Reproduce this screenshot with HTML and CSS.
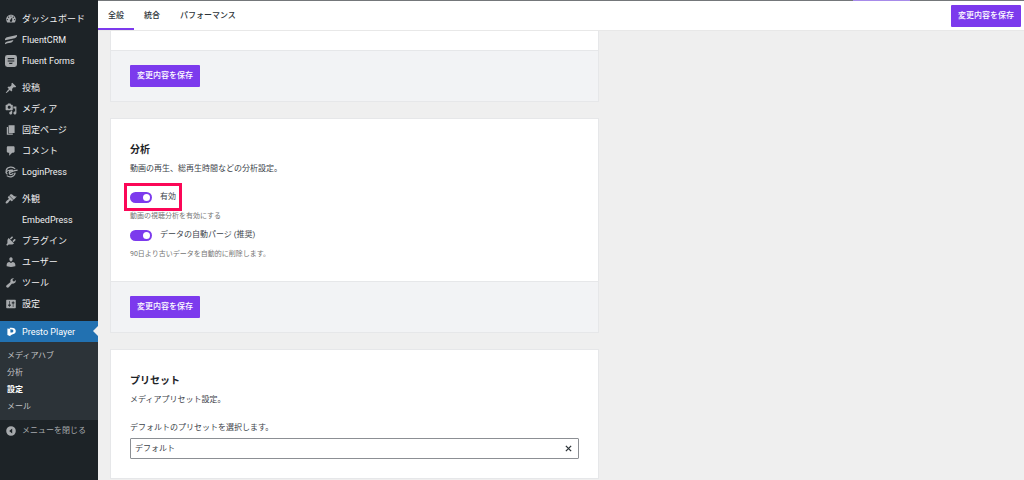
FILE: index.html
```html
<!DOCTYPE html>
<html lang="ja">
<head>
  <meta charset="UTF-8">
  <meta name="viewport" content="width=device-width, initial-scale=1.0">
  <title>Presto Player - 設定</title>
  <link rel="stylesheet" href="styles.css">
</head>
<body>
  <nav class="sidebar">
    <ul class="menu">
      <li><a href="#"><svg class="icon" viewBox="0 0 20 20"><path fill-rule="evenodd" d="M3.760 16h12.480c1.100-1.370 1.760-3.110 1.760-5 0-4.420-3.580-8-8-8s-8 3.580-8 8c0 1.890.66 3.630 1.760 5zM10 4c.55 0 1 .45 1 1s-.45 1-1 1-1-.45-1-1 .45-1 1-1zM6 6c.55 0 1 .45 1 1s-.45 1-1 1-1-.45-1-1 .45-1 1-1zm8 0c.55 0 1 .45 1 1s-.45 1-1 1-1-.45-1-1 .45-1 1-1zm-5.370 5.550L12 7v6c0 1.100-.9 2-2 2s-2-.9-2-2c0-.57.24-1.080.63-1.450zM4 10c.55 0 1 .45 1 1s-.45 1-1 1-1-.45-1-1 .45-1 1-1zm12 0c.55 0 1 .45 1 1s-.45 1-1 1-1-.45-1-1 .45-1 1-1z"/></svg>ダッシュボード</a></li>
      <li><a href="#"><svg class="icon" viewBox="0 0 20 20"><path d="M-1 11C0 7 2 5.500 5 5L21 1.500c-1 3.500-3 5-5 5.500L4 9.500C2 10 0 10 -1 11zM-1 18c1-4 3-5 5-5.500L14 10c-1 3-3 4-5 4.500L4 15.500c-2 .5-4 1.500-5 2.500z"/></svg>FluentCRM</a></li>
      <li><a href="#"><svg class="icon" viewBox="0 0 20 20"><path fill-rule="evenodd" d="M4 0h12a4 4 0 0 1 4 4v12a4 4 0 0 1-4 4H4a4 4 0 0 1-4-4V4a4 4 0 0 1 4-4zM4.500 5v2h11V5zM4.500 9v2h11V9zM7 13v2h3c1.500 0 2.500-.7 3-2z"/></svg>Fluent Forms</a></li>
    </ul>
    <ul class="menu">
      <li><a href="#"><svg class="icon" viewBox="0 0 20 20"><path d="M10.440 3.020l1.820-1.820 6.360 6.350-1.830 1.820c-1.050-.68-2.480-.57-3.410.36l-.75.75c-.92.93-1.040 2.350-.35 3.410l-1.830 1.820-2.410-2.410-2.800 2.790c-.42.42-3.380 2.710-3.800 2.290s1.860-3.390 2.280-3.810l2.790-2.790L4.100 9.360l1.830-1.820c1.050.69 2.480.57 3.400-.36l.75-.75c.93-.92 1.050-2.350.36-3.410z"/></svg>投稿</a></li>
      <li><a href="#"><svg class="icon" viewBox="0 0 20 20"><path fill-rule="evenodd" d="M13 11V4c0-.55-.45-1-1-1h-1.670L9 1H5L3.670 3H2c-.55 0-1 .45-1 1v7c0 .55.45 1 1 1h10c.55 0 1-.45 1-1zM7 4.500c1.380 0 2.500 1.120 2.500 2.500S8.380 9.500 7 9.500 4.500 8.380 4.500 7 5.620 4.500 7 4.500zM14 6h5v10.500c0 1.380-1.120 2.500-2.500 2.500S14 17.880 14 16.500s1.120-2.500 2.500-2.500c.17 0 .34.02.5.05V9h-3V6zm-4 8.050V13h2v3.500c0 1.380-1.120 2.500-2.500 2.500S7 17.880 7 16.500 8.120 14 9.500 14c.17 0 .34.02.5.05z"/></svg>メディア</a></li>
      <li><a href="#"><svg class="icon" viewBox="0 0 20 20"><path d="M6 15V2h10v13H6zm-1 1h8v2H3V5h2v11z"/></svg>固定ページ</a></li>
      <li><a href="#"><svg class="icon" viewBox="0 0 20 20"><path d="M5 2h9c1.100 0 2 .9 2 2v7c0 1.100-.9 2-2 2h-2l-5 5v-5H5c-1.100 0-2-.9-2-2V4c0-1.100.9-2 2-2z"/></svg>コメント</a></li>
      <li><a href="#"><svg class="icon icon-line" viewBox="0 0 20 20"><path d="M17 5C13 0 4 1 2 7c-1 3 0 5 2 7M3 16c5 4 13 2 14-5M1 11c3-4 7-5 12-4M7 12c3-3 7-4 14-5M7 12c1 3 4 3 7 0M13 7c-3 0-6 2-6 5"/></svg>LoginPress</a></li>
    </ul>
    <ul class="menu">
      <li><a href="#"><svg class="icon" viewBox="0 0 20 20"><path d="M14.480 11.060L7.410 3.990l1.500-1.500c.5-.56 2.300-.47 3.510.32 1.210.8 1.430 1.280 2.910 2.100 1.180.64 2.450 1.260 4.450.85zm-.71.71L6.700 4.700 4.930 6.470c-.39.39-.39 1.020 0 1.410l1.060 1.060c.39.39.39 1.030 0 1.420-.6.6-1.430 1.110-2.210 1.690-.35.26-.7.53-1.010.84C1.430 14.230.4 16.080 1.400 17.070c.99 1 2.840-.03 4.180-1.360.31-.31.58-.66.85-1.020.57-.78 1.080-1.610 1.690-2.210.39-.39 1.020-.39 1.410 0l1.060 1.060c.39.39 1.020.39 1.410 0z"/></svg>外観</a></li>
      <li><a href="#"><span class="icon"></span>EmbedPress</a></li>
      <li><a href="#"><svg class="icon" viewBox="0 0 20 20"><path d="M13.110 4.360L9.870 7.600 8 5.730l3.240-3.240c.35-.34 1.050-.2 1.560.32.52.51.66 1.210.31 1.550zm-8 1.770l.91-1.120 9.010 9.010-1.190.84c-.71.71-2.630 1.160-3.820 1.160H6.140L4.900 17.260c-.59.59-1.540.59-2.120 0-.59-.58-.59-1.530 0-2.120l1.240-1.240v-3.880c0-1.130.4-3.190 1.090-3.890zm7.260 3.970l3.240-3.240c.34-.35 1.040-.21 1.550.31.52.51.66 1.210.31 1.550l-3.240 3.250z"/></svg>プラグイン</a></li>
      <li><a href="#"><svg class="icon" viewBox="0 0 20 20"><path d="M10 9.250c-2.270 0-2.730-3.440-2.730-3.440C7 4.020 7.820 2 9.970 2c2.160 0 2.980 2.020 2.710 3.810 0 0-.41 3.440-2.680 3.440zm0 2.570L12.720 10c2.390 0 4.520 2.330 4.520 4.530v2.490s-3.650 1.130-7.240 1.130c-3.650 0-7.240-1.130-7.240-1.130v-2.490c0-2.250 1.940-4.480 4.470-4.480z"/></svg>ユーザー</a></li>
      <li><a href="#"><svg class="icon" viewBox="0 0 20 20"><path d="M16.680 9.770c-1.340 1.340-3.300 1.670-4.950.99l-5.410 6.520c-.99.99-2.590.99-3.580 0s-.99-2.590 0-3.570l6.520-5.420c-.68-1.650-.35-3.610.99-4.950 1.280-1.280 3.120-1.620 4.720-1.060l-2.890 2.890 2.820 2.820 2.860-2.870c.53 1.580.18 3.390-1.080 4.650z"/></svg>ツール</a></li>
      <li><a href="#"><svg class="icon" viewBox="0 0 20 20"><path fill-rule="evenodd" d="M18 16V4c0-.55-.45-1-1-1H3c-.55 0-1 .45-1 1v12c0 .55.45 1 1 1h14c.55 0 1-.45 1-1zM8 11h1c.55 0 1 .45 1 1s-.45 1-1 1H8v1.500c0 .28-.22.5-.5.5s-.5-.22-.5-.5V13H6c-.55 0-1-.45-1-1s.45-1 1-1h1V5.500c0-.28.22-.5.5-.5s.5.22.5.5V11zm5-2h-1c-.55 0-1-.45-1-1s.45-1 1-1h1V5.500c0-.28.22-.5.5-.5s.5.22.5.5V7h1c.55 0 1 .45 1 1s-.45 1-1 1h-1v5.500c0 .28-.22.5-.5.5s-.5-.22-.5-.5V9z"/></svg>設定</a></li>
    </ul>
    <ul class="menu menu-plugin">
      <li class="current"><a href="#"><svg class="icon" viewBox="0 0 20 20"><path fill-rule="evenodd" d="M4 4l5 1v12l-5-2zM8 3h3c4 0 7 2 7 5.500S15 14 12 14l-3 2v-5h2c2 0 3-1 3-2.500S13 6 11 6L8 5z"/></svg>Presto Player</a></li>
    </ul>
    <ul class="submenu">
      <li><a href="#">メディアハブ</a></li>
      <li><a href="#">分析</a></li>
      <li><a href="#" class="active">設定</a></li>
      <li><a href="#">メール</a></li>
    </ul>
    <button type="button" class="collapse"><svg class="icon" viewBox="0 0 20 20"><path fill-rule="evenodd" d="M10 2a8 8 0 1 1 0 16 8 8 0 0 1 0-16zM12 6l-5 4 5 4z"/></svg>メニューを閉じる</button>
  </nav>

  <div class="content">
    <div class="progress"></div>
    <header class="topbar">
      <div class="tabs">
        <a href="#" class="tab selected">全般</a>
        <a href="#" class="tab">統合</a>
        <a href="#" class="tab">パフォーマンス</a>
      </div>
      <button type="button" class="btn">変更内容を保存</button>
    </header>

    <main class="panels">
      <section class="card card-cut">
        <div class="card-body"></div>
        <div class="card-footer"><button type="button" class="btn">変更内容を保存</button></div>
      </section>

      <section class="card">
        <div class="card-body">
          <h2>分析</h2>
          <p class="desc">動画の再生、総再生時間などの分析設定。</p>
          <div class="setting">
            <label class="toggle highlight"><input type="checkbox" checked>有効</label>
            <p class="help">動画の視聴分析を有効にする</p>
          </div>
          <div class="setting">
            <label class="toggle"><input type="checkbox" checked>データの自動パージ (推奨)</label>
            <p class="help">90日より古いデータを自動的に削除します。</p>
          </div>
        </div>
        <div class="card-footer"><button type="button" class="btn">変更内容を保存</button></div>
      </section>

      <section class="card">
        <div class="card-body preset">
          <h2>プリセット</h2>
          <p class="desc">メディアプリセット設定。</p>
          <label class="field-label" for="preset">デフォルトのプリセットを選択します。</label>
          <div class="combo">
            <input type="text" id="preset" value="デフォルト">
            <button type="button" aria-label="クリア"><svg viewBox="0 0 8 8"><path d="M1 1l6 6M7 1L1 7"/></svg></button>
          </div>
        </div>
      </section>
    </main>
  </div>
</body>
</html>
```
FILE: styles.css
```css
* {
  box-sizing: border-box;
}

body {
  margin: 0;
  min-height: 100vh;
  display: flex;
  background: #efefef;
  color: #3c434a;
  font-family: Roboto, "Noto Sans CJK JP", sans-serif;
  font-size: 8px;
  line-height: 12px;
}

h2,
p,
ul {
  margin: 0;
  padding: 0;
}

ul {
  list-style: none;
}

a {
  color: inherit;
  text-decoration: none;
}

button,
input {
  font: inherit;
  color: inherit;
}

/* Admin menu */
.sidebar {
  flex: none;
  width: 98px;
  padding-top: 8px;
  background: #1d2327;
  color: #f0f0f1;
}

.menu {
  margin-bottom: 6px;
  font-size: 9px;
}

.menu-plugin {
  margin: 7px 0 0;
}

.menu a,
.collapse {
  display: flex;
  align-items: center;
  gap: 5px;
  height: 21px;
  padding-left: 5px;
  white-space: nowrap;
}

.icon {
  flex: none;
  width: 12px;
  height: 12px;
  fill: #a7aaad;
}

.icon-line {
  fill: none;
  stroke: #a7aaad;
  stroke-width: 2;
  overflow: visible;
}

.current {
  position: relative;
  background: #2271b1;
  color: #fff;
}

.current .icon {
  fill: #fff;
}

.current::after {
  content: "";
  position: absolute;
  top: 5px;
  right: 0;
  border: 5px solid transparent;
  border-left: 0;
  border-right-color: #efefef;
}

.submenu {
  padding: 5px 7px;
  background: #2c3338;
  color: #c3c4c7;
}

.submenu a {
  display: block;
  line-height: 17px;
}

.submenu .active {
  color: #fff;
  font-weight: 700;
}

.collapse {
  width: 100%;
  padding-top: 0;
  padding-bottom: 0;
  border: 0;
  background: none;
  color: #a7aaad;
}

/* Settings screen */
.content {
  flex: 1;
  min-width: 0;
}

.progress {
  height: 1px;
  background: linear-gradient(90deg, #74777a calc(100% - 171px), #a78bea calc(100% - 171px), #a78bea calc(100% - 114px), #74777a calc(100% - 114px));
}

.topbar {
  display: flex;
  justify-content: space-between;
  align-items: center;
  height: 30px;
  padding-right: 3px;
  background: #fff;
  border-bottom: 1px solid #e8e8e8;
}

.tabs {
  display: flex;
  align-self: stretch;
}

.tab {
  display: flex;
  align-items: center;
  padding: 2px 10px 0;
  border-bottom: 2px solid transparent;
  color: #2c3338;
  font-weight: 500;
}

.selected {
  border-color: #7c3aed;
}

.btn {
  height: 22px;
  padding: 0 7px;
  border: 0;
  border-radius: 1px;
  background: #7c3aed;
  color: #fff;
  font-weight: 500;
}

.panels {
  display: flex;
  flex-direction: column;
  gap: 16px;
  max-width: 501px;
  padding-left: 12px;
}

.card {
  background: #fff;
  border: 1px solid #e6e7e9;
}

.card-cut {
  border-top: 0;
}

.card-body {
  padding: 24px 19px 21px;
}

.card-cut .card-body {
  padding: 19px 0 0;
}

.card-footer {
  padding: 14px 19px;
  background: #f2f3f5;
  border-top: 1px solid #e6e7e9;
}

.card-footer .btn {
  display: block;
}

h2 {
  color: #1d2327;
  font-size: 10px;
  line-height: 14px;
}

.desc {
  margin: 6px 0 16px;
}

.setting + .setting {
  margin-top: 7px;
}

.toggle {
  position: relative;
  display: flex;
  align-items: center;
  gap: 8px;
  width: max-content;
}

.toggle input {
  appearance: none;
  display: flex;
  justify-content: flex-end;
  width: 22px;
  height: 11px;
  margin: 0;
  padding: 2px;
  border-radius: 6px;
  background: #7c3aed;
}

.toggle input::before {
  content: "";
  width: 7px;
  height: 7px;
  border-radius: 50%;
  background: #fff;
}

.highlight::after {
  content: "";
  position: absolute;
  inset: -8px -6px;
  border: 3px solid #fb0757;
}

.help {
  margin-top: 7px;
  color: #757575;
  font-size: 7px;
}

.preset {
  padding-bottom: 19px;
}

.field-label {
  display: block;
  margin-bottom: 4px;
}

.combo {
  display: flex;
  align-items: center;
  height: 21px;
  border: 1px solid #8c8f94;
  border-radius: 1px;
}

.combo input {
  flex: 1;
  min-width: 0;
  padding: 0 4px;
  border: 0;
  outline: 0;
  background: none;
}

.combo button {
  display: flex;
  padding: 0 6px;
  border: 0;
  background: none;
}

.combo svg {
  width: 7px;
  height: 7px;
  stroke: #2c3338;
  stroke-width: 1.5;
}
```
